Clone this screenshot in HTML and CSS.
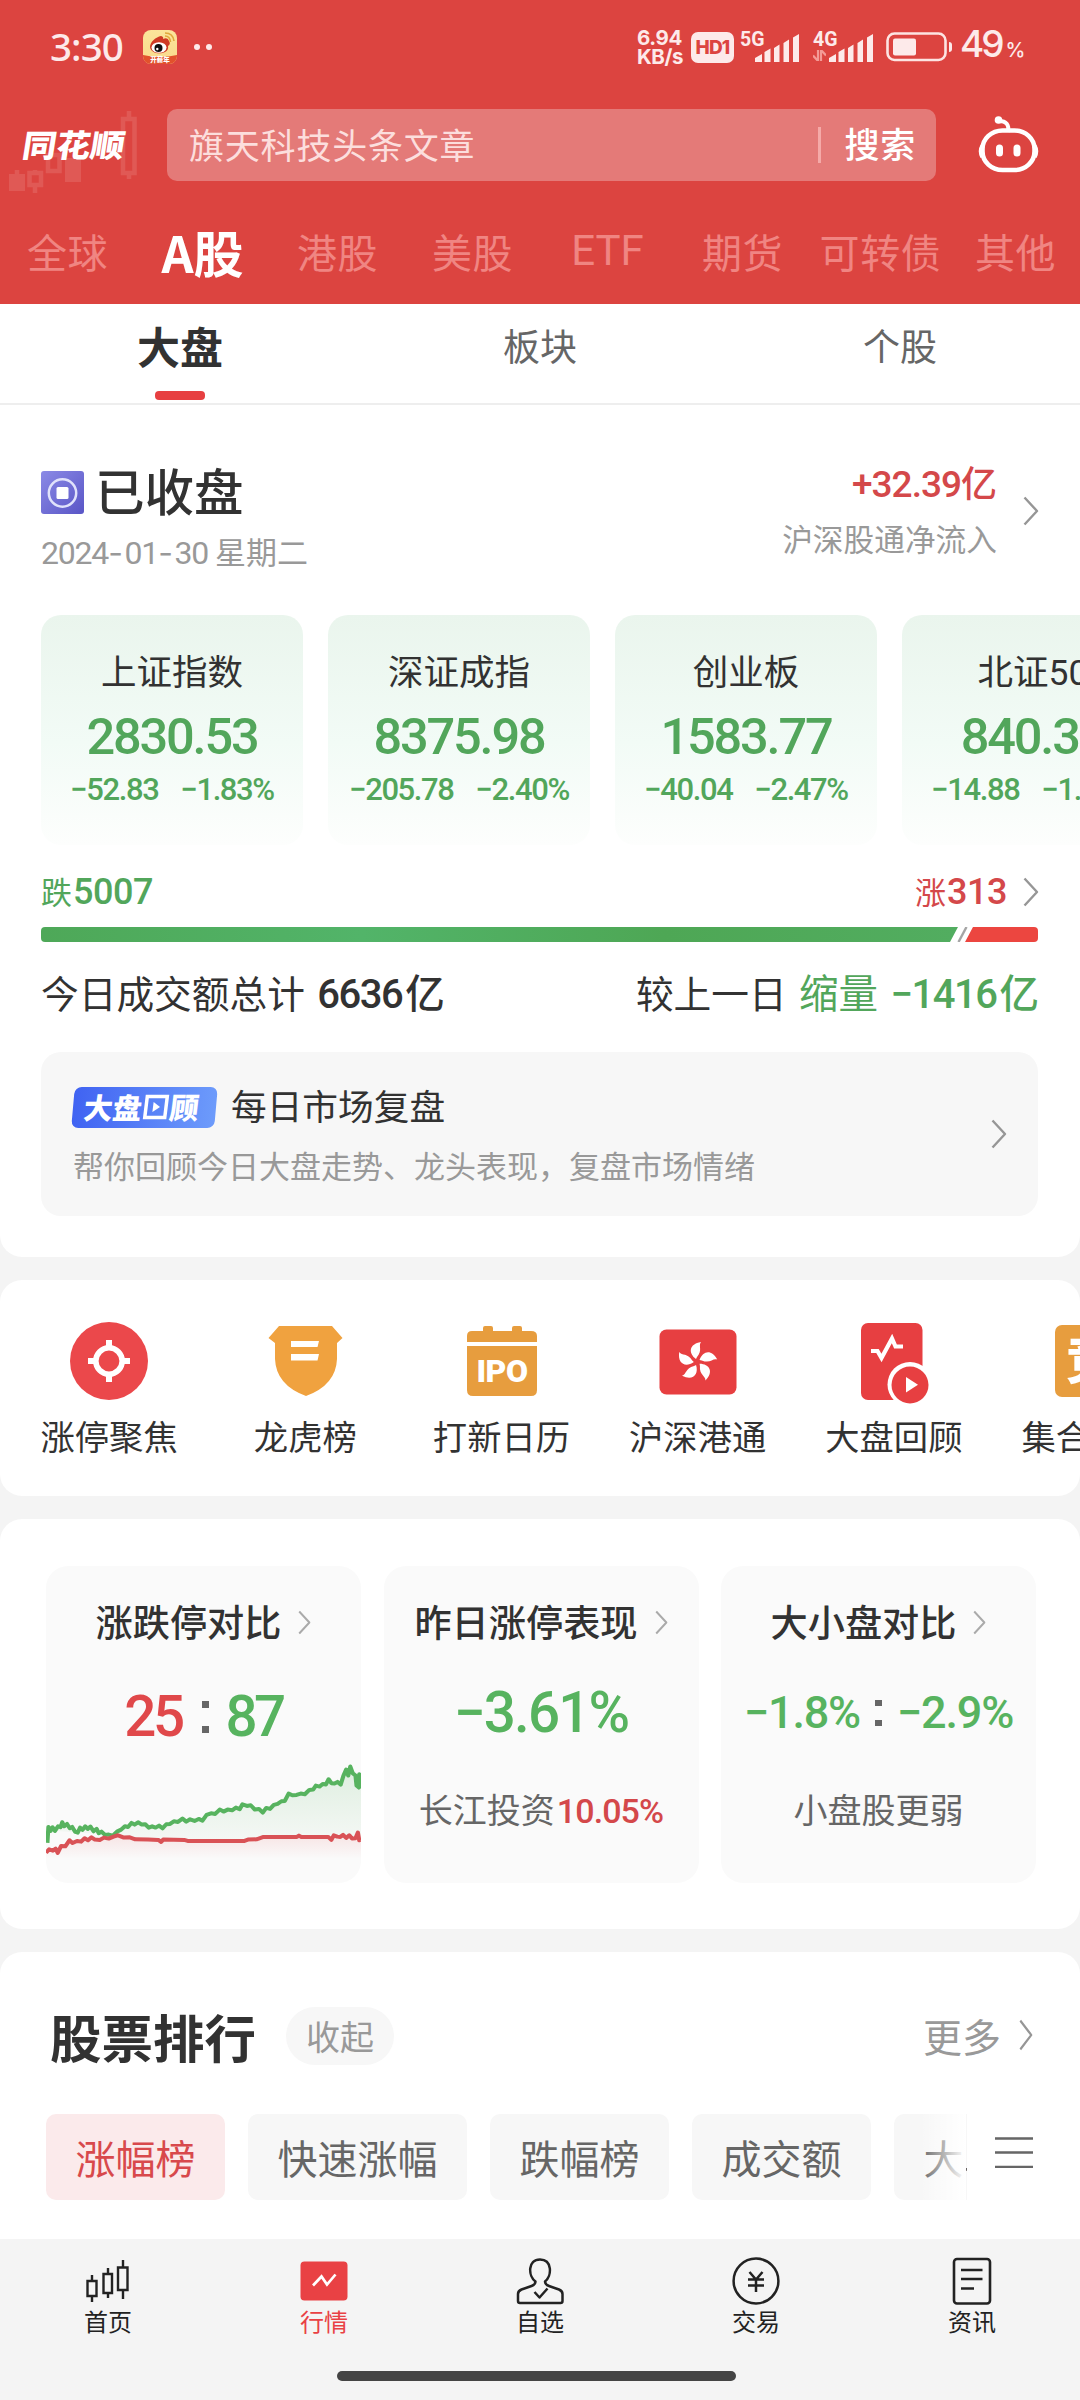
FILE: index.html
```html
<!DOCTYPE html>
<html lang="zh-CN">
<head>
<meta charset="utf-8">
<title>同花顺 行情</title>
<link rel="stylesheet" href="styles.css">
</head>
<body>
<svg class="defs" width="0" height="0" aria-hidden="true">
  <symbol id="chev" viewBox="0 0 16 30"><path d="M1.5 1.5 14 15 1.5 28.5" fill="none" stroke="currentColor" stroke-width="2.4" stroke-linejoin="round"/></symbol>
  <symbol id="bars" viewBox="0 0 44 28"><path d="M0 28v-4l7-4v8zM9.500 28V18l6-3.500V28zM19 28V14l5.500-3.500V28zM28.500 28V9l5.500-3.500V28zM38 28V3.500L44 0v28z" fill="currentColor"/></symbol>
</svg>

<header class="top">
  <div class="status">
    <span class="clock">3:30</span>
    <svg class="weibo" width="34" height="34" viewBox="0 0 34 34">
      <defs><linearGradient id="wb" x1="0" y1="0" x2="0" y2="1"><stop offset="0" stop-color="#fbe59a"/><stop offset="1" stop-color="#f9d98b"/></linearGradient><clipPath id="wc"><rect width="34" height="34" rx="8"/></clipPath></defs>
      <g clip-path="url(#wc)"><rect width="34" height="34" fill="url(#wb)"/><path d="M0 25q17 4 34 0v9H0z" fill="#e2512c"/></g>
      <path d="M7 17c0-5 6-10 11-11q3 1 2 3 5-2 6 2 2 3-1 5c2 9-17 10-18 1z" fill="#cf3a24"/>
      <ellipse cx="16" cy="17.500" rx="7.500" ry="5.300" fill="#fff"/><circle cx="15.500" cy="18" r="4" fill="#111"/><circle cx="14.300" cy="19" r="1.200" fill="#fff"/>
      <path d="M22 6q5 0 5.500 6M22 3q8 0 9 8" fill="none" stroke="#e0a83c" stroke-width="1.600"/>
      <text class="weibo-tag" x="17" y="32.300">开薪年</text>
    </svg>
    <i class="dot"></i><i class="dot"></i>
    <span class="speed">6.94<br>KB/s</span>
    <span class="hd">HD1</span>
    <span class="net"><b>5G</b><svg width="44" height="28"><use href="#bars"/></svg></span>
    <span class="net net2"><b>4G</b><svg class="updown" width="13" height="11" viewBox="0 0 13 11"><path d="M5 0v11L0 5.500M8 11V0l5 5.500" fill="none" stroke="#f49a96" stroke-width="2.200"/></svg><svg width="44" height="28"><use href="#bars"/></svg></span>
    <svg class="battery" width="67" height="30" viewBox="0 0 67 30"><rect x="1.500" y="1.500" width="58" height="26.500" rx="7" fill="none" stroke="#fde4e2" stroke-width="2.600"/><rect x="7" y="6.500" width="23" height="17" rx="2" fill="#fdeaea"/><path d="M63 10q3 0 3 3v4q0 3-3 3z" fill="#fdeaea"/></svg>
    <span class="pct">49<small>%</small></span>
  </div>
  <div class="searchrow">
    <div class="logo">
      <svg class="candles" width="140" height="90" viewBox="0 0 140 90" fill="none" stroke="#e05955" stroke-width="4.500"><path d="M9 65h16v17H9z" fill="#e05955" stroke="none"/><path d="M17 61v5M35 61v5M35 76v8M29.500 64h11.500v12H29.500zM129 2v7M129 64v6M123 10h11.500v54H123zM48 46h11.500v16H48z"/><path d="M65 49h16v24H65z" fill="#e05955" stroke="none"/></svg>
      <span>同花顺</span>
    </div>
    <div class="search"><span class="query">旗天科技头条文章</span><span class="go">搜索</span></div>
    <svg class="robot" width="61" height="58" viewBox="0 0 61 58" fill="none" stroke="#fff"><path d="M21 6q11 0 9 11" stroke-width="4"/><circle cx="20.500" cy="5" r="3.800" fill="#fff" stroke="none"/><rect x="4.500" y="15.500" width="52" height="39.500" rx="20" ry="18.500" stroke-width="4.600"/><path d="M4.500 31q-3 5 0 11M56.500 31q3 5 0 11" stroke-width="4.500"/><path d="M21.500 33v5M39 33v5" stroke-width="7" stroke-linecap="round"/></svg>
  </div>
  <nav class="markets"><span>全球</span><span class="on">A股</span><span>港股</span><span>美股</span><span class="latin">ETF</span><span>期货</span><span>可转债</span><span>其他</span></nav>
</header>

<nav class="subtabs"><span class="on">大盘</span><span>板块</span><span>个股</span></nav>

<section class="summary">
  <div class="closed">
    <div>
      <div class="closed-title">
        <svg width="43" height="43" viewBox="0 0 43 43"><defs><linearGradient id="pp" x1="0" y1="0" x2="1" y2="1"><stop offset="0" stop-color="#8b8ae6"/><stop offset="1" stop-color="#5955c6"/></linearGradient></defs><rect width="43" height="43" rx="3" fill="url(#pp)"/><circle cx="21.500" cy="22" r="13.700" fill="none" stroke="#e0e2fb" stroke-width="2.500"/><rect x="15.500" y="16" width="12" height="12" rx="1.500" fill="#fff"/></svg>
        <span>已收盘</span>
      </div>
      <div class="date"><span class="num">2024<i>-</i>01<i>-</i>30</span> 星期二</div>
    </div>
    <div class="flow">
      <div class="flow-text"><div class="flow-num"><span class="num">+32.39</span>亿</div><div class="flow-label">沪深股通净流入</div></div>
      <svg class="chev" width="16" height="30"><use href="#chev"/></svg>
    </div>
  </div>

  <div class="indices">
    <div class="index"><h3>上证指数</h3><strong>2830.53</strong><p><span>−52.83</span><span>−1.83%</span></p></div>
    <div class="index"><h3>深证成指</h3><strong>8375.98</strong><p><span>−205.78</span><span>−2.40%</span></p></div>
    <div class="index"><h3>创业板</h3><strong>1583.77</strong><p><span>−40.04</span><span>−2.47%</span></p></div>
    <div class="index"><h3>北证<span class="num">50</span></h3><strong>840.36</strong><p><span>−14.88</span><span>−1.74%</span></p></div>
  </div>

  <div class="breadth"><span class="down">跌<b>5007</b></span><span class="up">涨<b>313</b><svg class="chev" width="16" height="30"><use href="#chev"/></svg></span></div>
  <svg class="ratio" width="997" height="15" viewBox="0 0 997 15"><defs><linearGradient id="gr"><stop offset="0" stop-color="#4ea858"/><stop offset=".35" stop-color="#52b469"/><stop offset=".68" stop-color="#4ea755"/><stop offset="1" stop-color="#52ad60"/></linearGradient></defs><path d="M4 0H917L909 15H4Q0 15 0 11V4Q0 0 4 0z" fill="url(#gr)"/><path d="M932 0H993Q997 0 997 4V11Q997 15 993 15H924z" fill="#ec4640"/><path d="M925.500 0 917.500 15" stroke="#a5a5a5" stroke-width="2.400"/></svg>
  <div class="turnover">
    <span>今日成交额总计 <b class="num">6636</b><em>亿</em></span>
    <span>较上一日 <span class="down"><em>缩量</em> <b class="num">−1416</b><em>亿</em></span></span>
  </div>

  <div class="review">
    <div>
      <div class="review-title"><span class="badge"><i>大盘<svg width="26" height="28" viewBox="0 0 26 28"><rect x="3" y="3.500" width="20" height="21" fill="none" stroke="#fff" stroke-width="3.500"/><path d="M10 9v10l7-5z" fill="#fff"/></svg>顾</i></span><span>每日市场复盘</span></div>
      <p>帮你回顾今日大盘走势、龙头表现，复盘市场情绪</p>
    </div>
    <svg class="chev" width="16" height="30"><use href="#chev"/></svg>
  </div>
</section>

<section class="menu">
  <div><svg width="80" height="80" viewBox="0 0 80 80"><circle cx="40" cy="40" r="39" fill="#eb484b"/><circle cx="40" cy="40" r="13.200" fill="none" stroke="#fff" stroke-width="5.600"/><path d="M40 19v8M40 53v8M19 40h8M53 40h8" stroke="#fff" stroke-width="6"/></svg><span>涨停聚焦</span></div>
  <div><svg width="80" height="80" viewBox="0 0 80 80"><path d="M14 5H67L77.500 17 72 22V38Q71 64 41 75 11 64 10 38V22L3.500 17z" fill="#f0a23f"/><path d="M26 20H54L52.500 26H26zM26 33H54L52.500 39.500H26z" fill="#fff"/></svg><span>龙虎榜</span></div>
  <div><svg width="80" height="80" viewBox="0 0 80 80"><g fill="#e79d3e"><path d="M6 21V15q0-5 5-5H22V7q0-2 2-2h6q2 0 2 2v3H51V7q0-2 2-2h6q2 0 2 2v3H70q6 0 6 5v6z"/><path d="M6 25H76V69q0 6-6 6H12q-6 0-6-6z"/></g><text class="ipo" x="41" y="60.500">IPO</text></svg><span>打新日历</span></div>
  <div><svg width="80" height="80" viewBox="0 0 80 80"><rect x="1.500" y="8.500" width="77" height="65" rx="7" fill="#e73f41"/><g fill="#fff" transform="translate(39 41)"><path id="petal" d="M-1-3C-9-9-8-18 4-20 1-16 6-12 0-5z"/><use href="#petal" transform="rotate(72)"/><use href="#petal" transform="rotate(144)"/><use href="#petal" transform="rotate(216)"/><use href="#petal" transform="rotate(288)"/></g></svg><span>沪深港通</span></div>
  <div><svg width="80" height="84" viewBox="0 0 80 84"><rect x="7" y="2" width="61.500" height="77" rx="7" fill="#e73f41"/><path d="M17 30h6.500l4 7L38 17.500l3.500 8H49" fill="none" stroke="#fff" stroke-width="4.200"/><circle cx="56" cy="63.500" r="22.500" fill="#fff"/><circle cx="56" cy="64" r="18.500" fill="#e73f41"/><path d="M52 56v15.500l12-7.800z" fill="#fff"/></svg><span>大盘回顾</span></div>
  <div><svg width="80" height="80" viewBox="0 0 80 80"><rect x="5" y="4" width="70" height="72" rx="7" fill="#e79d3e"/><text class="bid" x="41" y="58">竞</text></svg><span>集合竞价</span></div>
</section>

<section class="stats">
  <article>
    <h3>涨跌停对比<svg width="13" height="25" viewBox="0 0 16 30"><use href="#chev" width="16" height="30"/></svg></h3>
    <div class="big pair"><span class="up">25</span><i class="colon"></i><span class="down">87</span></div>
    <svg class="trend" width="315" height="317" viewBox="134 168 914 950" preserveAspectRatio="none">
      <defs><linearGradient id="tg" x1="0" y1="780" x2="0" y2="1010" gradientUnits="userSpaceOnUse"><stop offset="0" stop-color="#52b35b" stop-opacity=".16"/><stop offset="1" stop-color="#52b35b" stop-opacity=".02"/></linearGradient><linearGradient id="tr" x1="0" y1="970" x2="0" y2="1045" gradientUnits="userSpaceOnUse"><stop offset="0" stop-color="#e0484a" stop-opacity=".13"/><stop offset="1" stop-color="#e0484a" stop-opacity="0"/></linearGradient></defs>
      <path fill="url(#tg)" d="M134 960 182 938 222 965 262 950 316 972 400 938 470 950 590 926 705 885 762 905 838 853 890 845 950 810 990 820 1016 778 1040 800 1048 800V980H780L700 990H470L340 975z"/>
      <path fill="url(#tr)" d="M134 1024 168 1020 205 990 260 988 340 975 440 986 540 991H710L770 980H950L1048 982V1050H134z"/>
      <path fill="none" stroke="#57b35f" stroke-width="12" stroke-linejoin="round" d="M138 998 141 950 147 962 153 951 160 962 169 948 176 951 181 936 187 948 195 941 203 954 210 950 219 965 226 967 233 952 240 959 248 948 255 956 263 949 272 963 281 956 287 969 295 964 305 974 316 973 328 976 340 964 352 958 363 948 372 950 382 938 391 943 401 936 412 943 422 942 432 952 442 948 452 952 462 946 472 954 483 942 494 941 505 933 517 935 530 925 541 934 552 927 565 932 577 926 588 931 600 914 613 909 625 911 638 898 649 904 661 898 674 900 685 892 696 897 704 882 717 887 728 885 740 898 752 896 763 907 773 893 784 896 795 884 806 881 817 873 827 872 838 850 849 855 861 854 873 850 885 852 898 839 909 838 917 826 928 829 937 821 946 823 954 807 962 819 971 820 980 815 989 823 997 797 1005 778 1011 796 1017 769 1024 789 1032 796 1035 826 1042 832 1043 792 1048 798"/>
      <path fill="none" stroke="#d95256" stroke-width="12" stroke-linejoin="round" d="M134 1027 143 1017 154 1021 162 1015 168 1028 178 1007 190 1008 202 990 211 998 224 992 236 994 246 984 256 990 266 981 276 988 290 989 302 982 316 985 330 979 343 975 360 982 377 981 393 987 430 988 460 989 468 995 474 988 535 989 545 992H710L720 988 745 987 765 980 862 980 868 976 875 980H953L962 989 969 975 979 979 988 980 996 974 1005 983 1014 975 1022 985 1032 984 1039 967 1043 990 1048 983"/>
    </svg>
  </article>
  <article>
    <h3>昨日涨停表现<svg width="13" height="25" viewBox="0 0 16 30"><use href="#chev" width="16" height="30"/></svg></h3>
    <div class="big mid"><span class="down">−3.61%</span></div>
    <p>长江投资<b class="up">10.05%</b></p>
  </article>
  <article>
    <h3>大小盘对比<svg width="13" height="25" viewBox="0 0 16 30"><use href="#chev" width="16" height="30"/></svg></h3>
    <div class="big small"><span class="down">−1.8%</span><i class="colon"></i><span class="down">−2.9%</span></div>
    <p>小盘股更弱</p>
  </article>
</section>

<section class="rank">
  <div class="rank-head"><h2>股票排行</h2><span class="fold">收起</span><span class="more">更多<svg class="chev" width="14" height="32" viewBox="0 0 16 30" preserveAspectRatio="none"><use href="#chev" width="16" height="30"/></svg></span></div>
  <div class="chips">
    <div class="chiplist"><span class="on">涨幅榜</span><span>快速涨幅</span><span>跌幅榜</span><span>成交额</span><span class="last">大单净量</span></div>
    <svg width="38" height="32" viewBox="0 0 38 32"><path d="M0 2.500h38M0 16.500h38M0 31h38" stroke="#666" stroke-width="2.600"/></svg>
  </div>
</section>

<footer class="tabbar">
  <div><svg width="48" height="48" viewBox="0 0 48 48" fill="none" stroke="#222" stroke-width="2.400"><path d="M8 18v6M8 40v5M3.500 24h9v15h-9zM24 11v6M24 36v5M19.500 17h8.500v19h-8.500zM39 3v7M39 33v9M34 10.500h9.500V33H34z"/></svg><span>首页</span></div>
  <div class="on"><svg width="48" height="48" viewBox="0 0 48 48"><rect x=".5" y="4.500" width="47" height="39" rx="4" fill="#e94144"/><path d="M13 28.500 21.500 19.500 27 27.500 35.500 17.500" fill="none" stroke="#fff" stroke-width="2.700"/></svg><span>行情</span></div>
  <div><svg width="48" height="48" viewBox="0 0 48 48" fill="none" stroke="#222" stroke-width="2.500" stroke-linejoin="round"><path d="M19.500 24.500C12 19 11.500 2.500 24 2.500S36 19 29 24.500q0 3 4 4.500l10 3.500q3.500 1.500 3.500 4.500V44q0 2-2 2H4q-2 0-2-2V37q0-3 3.500-4.500L15.500 29q4-1.500 4-4.500z"/><path d="M18.500 35l5 5.500 8-9"/></svg><span>自选</span></div>
  <div><svg width="48" height="48" viewBox="0 0 48 48" fill="none" stroke="#222" stroke-width="2.500"><circle cx="24" cy="24" r="22.400"/><path d="M17.500 15 24 22.500 30.500 15M24 22v13M16 22.500h16M16 28.500h16"/></svg><span>交易</span></div>
  <div><svg width="48" height="48" viewBox="0 0 48 48" fill="none" stroke="#222" stroke-width="2.600"><rect x="6" y="2" width="36" height="44.500" rx="3"/><path d="M13 13h21.500M13 22h21.500M13 31.500h13"/></svg><span>资讯</span></div>
  <i class="home"></i>
</footer>
</body>
</html>
```
FILE: styles.css
```css
* { box-sizing: border-box; margin: 0; padding: 0; }
html, body { width: 1080px; height: 2400px; overflow: hidden; }
body { background: #f4f4f4; font-family: "Noto Sans CJK SC", sans-serif; color: #323232; display: flex; flex-direction: column; }
svg { display: block; flex: none; }
.defs { position: absolute; }
i, em { font-style: normal; }
.num, strong, .big, .breadth b, .index p, .stats b { font-family: Roboto, "Noto Sans CJK SC", sans-serif; }
.num { line-height: 1; }
.up { color: #d4484a; }
.down { color: #52a65b; }
.chev { color: #969696; }

/* header */
.top { height: 304px; flex: none; background: #dc4440; color: #fff; }
.status { height: 94px; display: flex; align-items: center; padding-left: 50px; color: #fdeaea; }
.clock { width: 93px; font: 500 38.500px/50px "Noto Sans", sans-serif; letter-spacing: -.9px; margin-top: -2px; }
.weibo { margin-right: 17px; }
.weibo-tag { font: 900 6.500px "Noto Sans CJK SC", sans-serif; fill: #fff; text-anchor: middle; }
.dot { width: 6px; height: 6px; border-radius: 50%; background: #fdeaea; margin-right: 6px; }
.speed { margin-left: 419px; width: 54px; font: 700 20.500px/19px Inter, sans-serif; letter-spacing: -.4px; white-space: nowrap; }
.hd { width: 43px; height: 31px; margin-right: 6px; border-radius: 7px; background: #fdeaea; color: #dc4440; font: 800 19px/31px Inter, sans-serif; text-align: center; letter-spacing: -.8px; }
.net { position: relative; width: 59px; height: 30px; display: flex; justify-content: flex-end; align-items: flex-end; }
.net b { position: absolute; left: 0; top: -2px; font: 700 19.500px/19px Roboto, sans-serif; }
.net2 { margin-left: 14px; width: 60px; }
.updown { position: absolute; left: 0; bottom: 1px; }
.battery { margin-left: 13px; }
.pct { margin-left: 7px; font: 500 37px/50px Inter, sans-serif; letter-spacing: -3px; white-space: nowrap; }
.pct small { font-size: 20px; margin-left: 4px; }

.searchrow { height: 87px; padding-top: 15px; display: flex; }
.logo { position: relative; width: 167px; height: 72px; }
.logo span { position: absolute; left: 23px; top: 11px; font-size: 34px; line-height: 48px; font-weight: 900; transform: skewX(-9deg) scaleY(.92); white-space: nowrap; }
.candles { position: absolute; left: 0; top: 0; }
.search { width: 769px; height: 72px; border-radius: 10px; background: #e47a78; padding: 0 20px 0 22px; display: flex; align-items: center; justify-content: space-between; font-size: 35px; letter-spacing: .8px; }
.query, .go { position: relative; top: -2px; }
.query { color: #fcdedd; }
.go { padding-left: 23px; line-height: 36px; font-weight: 500; }
.go::before { content: ""; position: absolute; left: -3px; top: 2px; width: 3px; height: 36px; background: #f5aaa8; }
.robot { margin: 6px 0 0 42px; }

.markets { height: 122px; padding-top: 17px; display: grid; grid-template-columns: repeat(6, 135px) 141px 129px; align-items: center; text-align: center; font-size: 40px; letter-spacing: .6px; line-height: 60px; color: #f08582; }
.markets .on { font-size: 50px; font-weight: 700; letter-spacing: 0; color: #fff; }
.markets .latin { font-family: Roboto, sans-serif; font-size: 42px; letter-spacing: 0; }

.subtabs { height: 101px; flex: none; background: #fff; border-bottom: 2px solid #eee; display: grid; grid-template-columns: repeat(3, 1fr); text-align: center; font-size: 37px; line-height: 82px; color: #666; }
.subtabs .on { position: relative; font-size: 43px; font-weight: 700; color: #323232; }
.subtabs .on::after { content: ""; position: absolute; left: 155px; top: 87px; width: 50px; height: 9px; border-radius: 4px; background: #e73f41; }

/* summary */
.summary { height: 852px; flex: none; background: #fff; border-radius: 0 0 22px 22px; padding-left: 41px; overflow: hidden; }
.closed { height: 210px; padding: 56px 41px 0 0; display: flex; justify-content: space-between; }
.closed-title { display: flex; align-items: center; gap: 11px; height: 62px; font-size: 49.500px; font-weight: 500; line-height: 62px; }
.closed-title span { margin-top: -4px; }
.date { margin-top: 8px; font-size: 31px; line-height: 40px; color: #999; white-space: nowrap; }
.date .num { font-size: 32px; letter-spacing: -1.200px; }
.date .num i { font-family: Inter, sans-serif; letter-spacing: 1.700px; }
.flow { display: flex; gap: 26px; margin-top: -3px; }
.flow .chev { margin-top: 38px; }
.flow-text { text-align: right; }
.flow-num { height: 46px; font-size: 36px; line-height: 46px; color: #d4484a; font-weight: 500; }
.flow-num .num { font-size: 37px; letter-spacing: -1px; }
.flow-label { margin-top: 14px; font-size: 30.700px; line-height: 40px; color: #999; }

.indices { display: flex; gap: 25px; height: 230px; }
.index { flex: 0 0 262px; border-radius: 20px; background: linear-gradient(#eaf5ed, #f2fbf6 55%, #fdfefd); text-align: center; color: #52a65b; white-space: nowrap; }
.index h3 { margin-top: 33px; height: 44px; font-size: 35.500px; line-height: 44px; font-weight: 400; color: #323232; }
.index strong { display: block; margin-top: 15px; font-size: 50.500px; line-height: 60px; font-weight: 500; letter-spacing: -2.200px; }
.index p { margin-top: 6px; display: flex; justify-content: center; gap: 22px; font-size: 31px; line-height: 34px; font-weight: 500; letter-spacing: -1.400px; }

.breadth { margin: 27px 41px 0 0; height: 40px; display: flex; justify-content: space-between; font-size: 31px; line-height: 38px; }
.breadth span { display: flex; }
.breadth b { font-size: 36px; line-height: 41px; font-weight: 500; letter-spacing: -.5px; margin-left: 1px; }
.breadth .chev { margin: 5px 0 0 16px; }
.ratio { margin-top: 15px; }
.turnover { margin: 22px 41px 0 0; height: 58px; display: flex; justify-content: space-between; font-size: 37.700px; line-height: 56px; white-space: pre; }
.turnover em { font-size: 39.500px; line-height: 1; }
.turnover .num { font-size: 40px; font-weight: 500; letter-spacing: -1.500px; margin-left: 4px; }
.turnover em:first-child { margin-left: 4px; }
.turnover em:last-child { font-weight: 500; margin-left: 3px; }

.review { margin-top: 30px; width: 997px; height: 164px; padding: 0 31px 0 32px; border-radius: 20px; background: #f7f7f7; display: flex; justify-content: space-between; align-items: center; }
.review-title { display: flex; gap: 15px; align-items: center; height: 48px; font-size: 35.700px; line-height: 46px; margin-top: 1px; }
.review-title > span:last-child { margin-top: -4px; }
.badge { width: 143px; height: 41px; border-radius: 7px; background: linear-gradient(90deg, #4063f2, #6d9bfb); transform: skewX(-5deg); color: #fff; font-size: 29px; font-weight: 900; line-height: 39px; padding-left: 11px; }
.badge i { display: flex; align-items: center; gap: 1px; transform: skewX(-2deg); }
.review p { margin-top: 13px; font-size: 31px; line-height: 42px; color: #999; }

/* shortcuts */
.menu, .stats, .rank { flex: none; margin-top: 23px; background: #fff; border-radius: 22px; }
.menu { height: 216px; padding: 41px 0 0 11px; display: flex; overflow: hidden; }
.menu div { flex: 0 0 196.200px; display: flex; flex-direction: column; align-items: center; white-space: nowrap; font-size: 34.300px; line-height: 48px; }
.menu svg { height: 84px; margin-bottom: 6px; }
.menu svg[height="80"] { height: 80px; margin-bottom: 10px; }
.ipo { font: 900 32px Roboto, sans-serif; fill: #fff; text-anchor: middle; letter-spacing: -.5px; }
.bid { font: 900 50px "Noto Sans CJK SC", sans-serif; fill: #fff; text-anchor: middle; }

/* stat cards */
.stats { height: 410px; padding: 47px 44px 0 46px; display: grid; grid-template-columns: repeat(3, 315px); column-gap: 22.500px; align-content: start; }
.stats article { position: relative; height: 317px; border-radius: 22px; background: #fafafa; overflow: hidden; text-align: center; }
.stats h3 { margin-top: 31px; height: 48px; display: flex; justify-content: center; align-items: center; gap: 17px; font-size: 37.200px; line-height: 48px; font-weight: 500; color: #323232; }
.stats h3 svg { color: #aaa; margin-top: 2px; }
.big { position: relative; z-index: 1; margin-top: 37px; height: 70px; display: flex; justify-content: center; align-items: center; gap: 17px; font-size: 56.500px; font-weight: 500; line-height: 70px; letter-spacing: -1.500px; }
.big .down { color: #57b35f; }
.big .up { color: #e0484a; }
.pair { letter-spacing: -3.500px; gap: 20px; }
.pair .down { margin-left: -3px; }
.colon { width: 7px; height: 32px; border: solid #666; border-width: 7px 0; }
.mid { margin-top: 33px; letter-spacing: -1.800px; }
.small { margin-top: 33px; gap: 15px; font-size: 45px; letter-spacing: -1.200px; }
.small .colon { height: 26px; border-width: 6px 0; }
.trend { position: absolute; left: 0; top: 0; }
.stats p { margin-top: 36px; font-size: 34px; line-height: 50px; color: #666; white-space: nowrap; }
.stats p b { font-weight: 500; line-height: 1; letter-spacing: -.9px; margin-left: 2px; }

/* ranking */
.rank { height: 287px; border-radius: 22px 22px 0 0; padding-left: 46px; }
.rank-head { height: 162px; padding: 55px 47px 0 4px; display: flex; align-items: flex-start; color: #999; }
.rank-head h2 { font-size: 51.500px; line-height: 57px; font-weight: 700; color: #323232; }
.fold { margin-left: 30px; width: 108px; height: 58px; border-radius: 29px; background: #f7f7f7; font-size: 34px; line-height: 58px; text-align: center; }
.more { margin-left: auto; display: flex; align-items: center; gap: 18px; font-size: 39px; line-height: 56px; }
.chips { display: flex; justify-content: space-between; padding-right: 47px; align-items: flex-start; }
.chips > svg { margin-top: 22px; }
.chiplist { position: relative; width: 921px; height: 86px; display: flex; gap: 23px; overflow: hidden; }
.chiplist span { flex: none; height: 86px; padding: 0 29.500px; border-radius: 10px; background: #f7f7f7; font-size: 40px; line-height: 86px; color: #666; white-space: nowrap; }
.chiplist .on { background: #fbeaeb; color: #d8494c; }
.chiplist::after { content: ""; position: absolute; right: 1px; top: 0; width: 46px; height: 86px; background: linear-gradient(90deg, #fff0, #fff); }

/* bottom navigation */
.tabbar { position: relative; height: 161px; flex: none; padding-top: 18px; display: grid; grid-template-columns: repeat(5, 1fr); background: #f4f4f4; }
.tabbar div { display: flex; flex-direction: column; align-items: center; font-size: 24px; line-height: 32px; color: #222; }
.tabbar .on { color: #e94144; }
.home { position: absolute; left: 337px; top: 132px; width: 399px; height: 10px; border-radius: 5px; background: #444; }
```
